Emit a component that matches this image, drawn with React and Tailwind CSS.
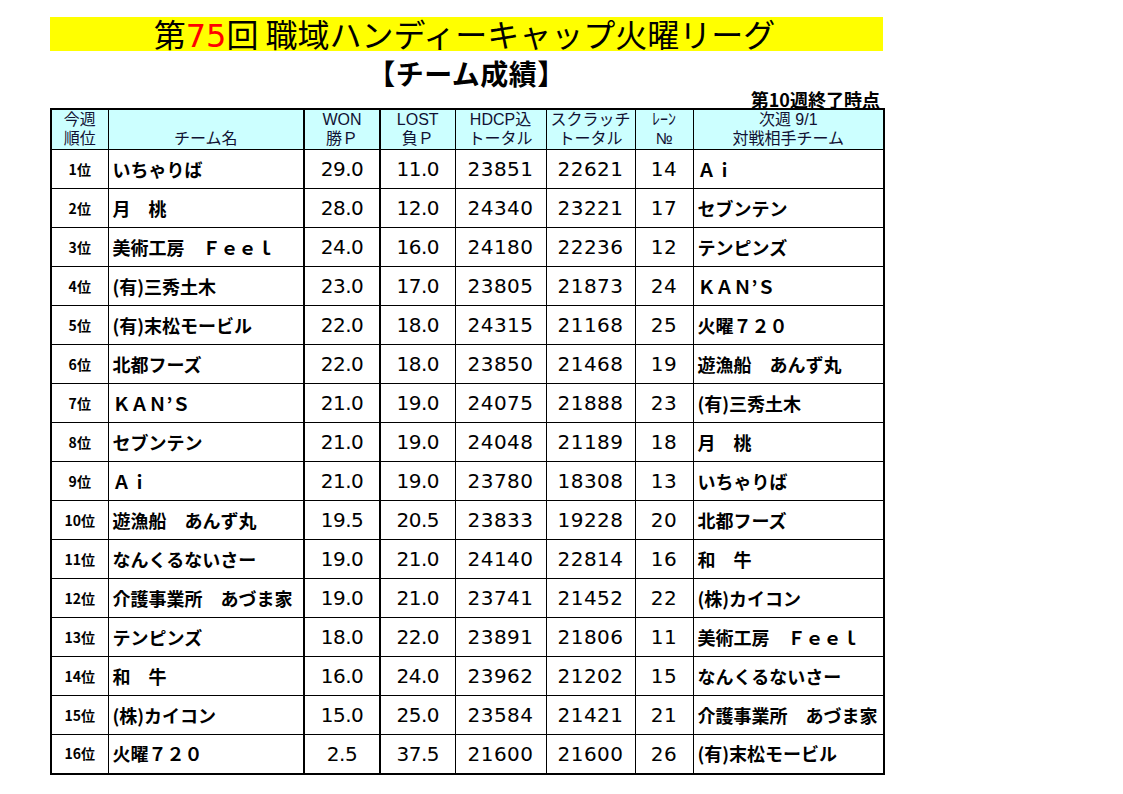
import React from 'react';

const jp = { fontFamily: '"Noto Sans CJK JP", "Noto Sans", sans-serif' };
const mixed = { fontFamily: '"Liberation Sans", "Noto Sans CJK JP", sans-serif' };
const num = { fontFamily: '"DejaVu Sans", "Liberation Sans", sans-serif' };

const rows = [
  [1, 'いちゃりば', '29.0', '11.0', '23851', '22621', '14', 'Ａｉ'],
  [2, '月　桃', '28.0', '12.0', '24340', '23221', '17', 'セブンテン'],
  [3, '美術工房　Ｆｅｅｌ', '24.0', '16.0', '24180', '22236', '12', 'テンピンズ'],
  [4, '(有)三秀土木', '23.0', '17.0', '23805', '21873', '24', 'ＫＡＮ’Ｓ'],
  [5, '(有)末松モービル', '22.0', '18.0', '24315', '21168', '25', '火曜７２０'],
  [6, '北都フーズ', '22.0', '18.0', '23850', '21468', '19', '遊漁船　あんず丸'],
  [7, 'ＫＡＮ’Ｓ', '21.0', '19.0', '24075', '21888', '23', '(有)三秀土木'],
  [8, 'セブンテン', '21.0', '19.0', '24048', '21189', '18', '月　桃'],
  [9, 'Ａｉ', '21.0', '19.0', '23780', '18308', '13', 'いちゃりば'],
  [10, '遊漁船　あんず丸', '19.5', '20.5', '23833', '19228', '20', '北都フーズ'],
  [11, 'なんくるないさー', '19.0', '21.0', '24140', '22814', '16', '和　牛'],
  [12, '介護事業所　あづま家', '19.0', '21.0', '23741', '21452', '22', '(株)カイコン'],
  [13, 'テンピンズ', '18.0', '22.0', '23891', '21806', '11', '美術工房　Ｆｅｅｌ'],
  [14, '和　牛', '16.0', '24.0', '23962', '21202', '15', 'なんくるないさー'],
  [15, '(株)カイコン', '15.0', '25.0', '23584', '21421', '21', '介護事業所　あづま家'],
  [16, '火曜７２０', '2.5', '37.5', '21600', '21600', '26', '(有)末松モービル'],
];

const HeadCell = ({ top, bottom, className = '' }) => (
  <th
    className={`bg-[#ccffff] border-black font-normal text-[16px] leading-[19px] text-[#111133] align-bottom pb-[1px] whitespace-nowrap ${className}`}
    style={mixed}
  >
    <div className="h-[19px]">{top}</div>
    <div className="h-[19px]">{bottom}</div>
  </th>
);

export default function App() {
  return (
    <div className="w-[1123px] h-[794px] bg-white pt-[17px] pl-[50px]">
      <div className="w-[833px]">
        {/* title bar */}
        <div className="h-[34px] bg-[#ffff00] flex items-center justify-center text-black" style={jp}>
          <div className="pr-[4px] text-[32px] leading-[32px]">
            第<span className="text-[#ff0000]" style={num}>75</span>回 職域ハンディーキャップ火曜リーグ
          </div>
        </div>
        <div className="h-[40px] flex items-center justify-center pt-[4px]" style={jp}>
          <div className="text-[28px] leading-[28px] font-bold text-black tracking-[0.5px]">【チーム成績】</div>
        </div>
        <div className="h-[17px] flex items-end justify-end pr-[3px] text-[18px] leading-[17px] font-bold text-black" style={jp}>
          第10週終了時点
        </div>

        <table className="w-[833px] border-collapse border-2 border-black table-fixed">
          <colgroup>
            <col className="w-[57px]" />
            <col className="w-[196px]" />
            <col className="w-[76px]" />
            <col className="w-[75px]" />
            <col className="w-[91px]" />
            <col className="w-[89px]" />
            <col className="w-[58px]" />
            <col className="w-[191px]" />
          </colgroup>
          <thead>
            <tr className="h-[40px] border-t-2 border-black">
              <HeadCell top="今週" bottom="順位" className="border-r" />
              <HeadCell top="" bottom="チーム名" className="border-r-2" />
              <HeadCell top="WON" bottom="勝Ｐ" className="border-r-2" />
              <HeadCell top="LOST" bottom="負Ｐ" className="border-r" />
              <HeadCell top="HDCP込" bottom="トータル" className="border-r" />
              <HeadCell top="スクラッチ" bottom="トータル" className="border-r" />
              <HeadCell top="ﾚｰﾝ" bottom="№" className="border-r" />
              <HeadCell top="次週 9/1" bottom="対戦相手チーム" />
            </tr>
          </thead>
          <tbody>
            {rows.map(([rank, name, won, lost, hdcp, scratch, lane, opp]) => (
              <tr key={rank} className="h-[39px] border-t border-black text-black">
                <td className="border-r border-black text-center text-[14px] font-bold" style={jp}>
                  {rank}位
                </td>
                <td className="border-r-2 border-black pl-[4px] text-[18px] font-bold whitespace-nowrap" style={jp}>
                  {name}
                </td>
                <td className="border-r-2 border-black text-center text-[20px] tracking-[-0.5px]" style={num}>
                  {won}
                </td>
                <td className="border-r border-black text-center text-[20px] tracking-[-0.5px]" style={num}>
                  {lost}
                </td>
                <td className="border-r border-black text-center text-[20px] tracking-[0.5px]" style={num}>
                  {hdcp}
                </td>
                <td className="border-r border-black text-center text-[20px] tracking-[0.5px]" style={num}>
                  {scratch}
                </td>
                <td className="border-r border-black text-center text-[20px] tracking-[0.5px]" style={num}>
                  {lane}
                </td>
                <td className="pl-[4px] text-[18px] font-bold whitespace-nowrap" style={jp}>
                  {opp}
                </td>
              </tr>
            ))}
          </tbody>
        </table>
      </div>
    </div>
  );
}
